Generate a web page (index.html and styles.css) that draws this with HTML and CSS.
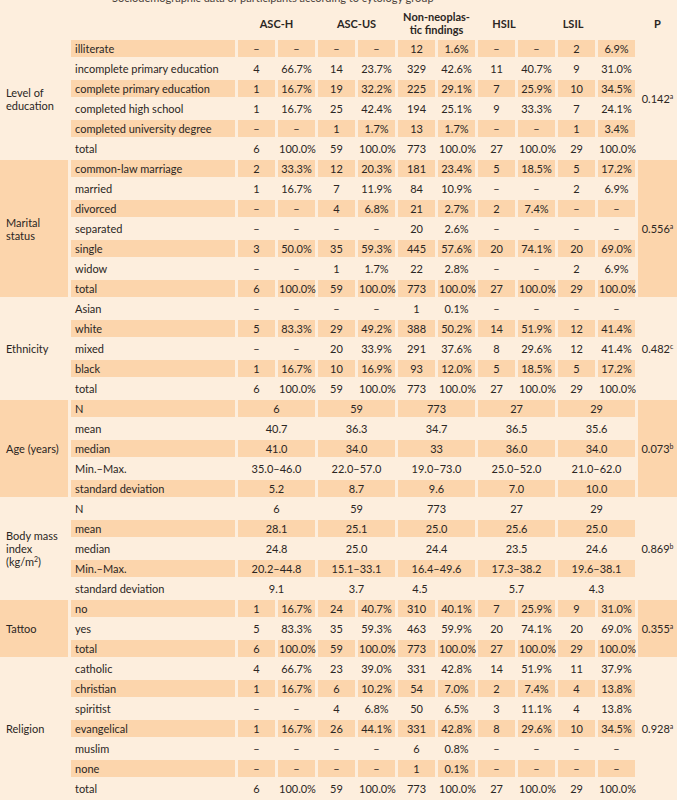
FILE: index.html
```html
<!DOCTYPE html>
<html lang="en">
<head>
    <meta charset="UTF-8">
    <meta name="viewport" content="width=device-width, initial-scale=1.0">
    <title>Sociodemographic data by cytology result</title>
    <link rel="stylesheet" href="styles.css">
</head>
<body>

<div class="caption"><span>Sociodemographic data of participants according to cytology group</span></div>

<table class="results">
    <colgroup>
        <col class="col-group">
        <col class="col-label">
        <col class="col-n"><col class="col-n">
        <col class="col-n"><col class="col-n">
        <col class="col-n"><col class="col-n">
        <col class="col-n"><col class="col-n">
        <col class="col-n"><col class="col-n">
        <col class="col-p">
    </colgroup>
    <thead>
        <tr class="head">
            <th colspan="2"></th>
            <th colspan="2">ASC-H</th>
            <th colspan="2">ASC-US</th>
            <th colspan="2">Non-neoplas-<br>tic findings</th>
            <th colspan="2" class="head-hsil">HSIL</th>
            <th colspan="2" class="head-lsil">LSIL</th>
            <th>P</th>
        </tr>
    </thead>
    <tbody>
        <!-- Level of education -->
        <tr class="band">
            <th class="grp" rowspan="6">Level of<br>education</th>
            <td class="label">illiterate</td>
            <td>–</td><td>–</td><td>–</td><td>–</td><td>12</td><td>1.6%</td><td>–</td><td>–</td><td>2</td><td>6.9%</td>
            <td class="p" rowspan="6">0.142<sup>a</sup></td>
        </tr>
        <tr>
            <td class="label">incomplete primary education</td>
            <td>4</td><td>66.7%</td><td>14</td><td>23.7%</td><td>329</td><td>42.6%</td><td>11</td><td>40.7%</td><td>9</td><td>31.0%</td>
        </tr>
        <tr class="band">
            <td class="label">complete primary education</td>
            <td>1</td><td>16.7%</td><td>19</td><td>32.2%</td><td>225</td><td>29.1%</td><td>7</td><td>25.9%</td><td>10</td><td>34.5%</td>
        </tr>
        <tr>
            <td class="label">completed high school</td>
            <td>1</td><td>16.7%</td><td>25</td><td>42.4%</td><td>194</td><td>25.1%</td><td>9</td><td>33.3%</td><td>7</td><td>24.1%</td>
        </tr>
        <tr class="band">
            <td class="label">completed university degree</td>
            <td>–</td><td>–</td><td>1</td><td>1.7%</td><td>13</td><td>1.7%</td><td>–</td><td>–</td><td>1</td><td>3.4%</td>
        </tr>
        <tr>
            <td class="label">total</td>
            <td>6</td><td>100.0%</td><td>59</td><td>100.0%</td><td>773</td><td>100.0%</td><td>27</td><td>100.0%</td><td>29</td><td>100.0%</td>
        </tr>

        <!-- Marital status -->
        <tr class="band">
            <th class="grp shade" rowspan="7">Marital<br>status</th>
            <td class="label">common-law marriage</td>
            <td>2</td><td>33.3%</td><td>12</td><td>20.3%</td><td>181</td><td>23.4%</td><td>5</td><td>18.5%</td><td>5</td><td>17.2%</td>
            <td class="p shade" rowspan="7">0.556<sup>a</sup></td>
        </tr>
        <tr>
            <td class="label">married</td>
            <td>1</td><td>16.7%</td><td>7</td><td>11.9%</td><td>84</td><td>10.9%</td><td>–</td><td>–</td><td>2</td><td>6.9%</td>
        </tr>
        <tr class="band">
            <td class="label">divorced</td>
            <td>–</td><td>–</td><td>4</td><td>6.8%</td><td>21</td><td>2.7%</td><td>2</td><td>7.4%</td><td>–</td><td>–</td>
        </tr>
        <tr>
            <td class="label">separated</td>
            <td>–</td><td>–</td><td>–</td><td>–</td><td>20</td><td>2.6%</td><td>–</td><td>–</td><td>–</td><td>–</td>
        </tr>
        <tr class="band">
            <td class="label">single</td>
            <td>3</td><td>50.0%</td><td>35</td><td>59.3%</td><td>445</td><td>57.6%</td><td>20</td><td>74.1%</td><td>20</td><td>69.0%</td>
        </tr>
        <tr>
            <td class="label">widow</td>
            <td>–</td><td>–</td><td>1</td><td>1.7%</td><td>22</td><td>2.8%</td><td>–</td><td>–</td><td>2</td><td>6.9%</td>
        </tr>
        <tr class="band">
            <td class="label">total</td>
            <td>6</td><td>100.0%</td><td>59</td><td>100.0%</td><td>773</td><td>100.0%</td><td>27</td><td>100.0%</td><td>29</td><td>100.0%</td>
        </tr>

        <!-- Ethnicity -->
        <tr>
            <th class="grp" rowspan="5">Ethnicity</th>
            <td class="label">Asian</td>
            <td>–</td><td>–</td><td>–</td><td>–</td><td>1</td><td>0.1%</td><td>–</td><td>–</td><td>–</td><td>–</td>
            <td class="p" rowspan="5">0.482<sup>c</sup></td>
        </tr>
        <tr class="band">
            <td class="label">white</td>
            <td>5</td><td>83.3%</td><td>29</td><td>49.2%</td><td>388</td><td>50.2%</td><td>14</td><td>51.9%</td><td>12</td><td>41.4%</td>
        </tr>
        <tr>
            <td class="label">mixed</td>
            <td>–</td><td>–</td><td>20</td><td>33.9%</td><td>291</td><td>37.6%</td><td>8</td><td>29.6%</td><td>12</td><td>41.4%</td>
        </tr>
        <tr class="band">
            <td class="label">black</td>
            <td>1</td><td>16.7%</td><td>10</td><td>16.9%</td><td>93</td><td>12.0%</td><td>5</td><td>18.5%</td><td>5</td><td>17.2%</td>
        </tr>
        <tr>
            <td class="label">total</td>
            <td>6</td><td>100.0%</td><td>59</td><td>100.0%</td><td>773</td><td>100.0%</td><td>27</td><td>100.0%</td><td>29</td><td>100.0%</td>
        </tr>

        <!-- Age -->
        <tr class="band">
            <th class="grp shade" rowspan="5">Age (years)</th>
            <td class="label">N</td>
            <td colspan="2">6</td><td colspan="2">59</td><td colspan="2">773</td><td colspan="2">27</td><td colspan="2">29</td>
            <td class="p shade" rowspan="5">0.073<sup>b</sup></td>
        </tr>
        <tr>
            <td class="label">mean</td>
            <td colspan="2">40.7</td><td colspan="2">36.3</td><td colspan="2">34.7</td><td colspan="2">36.5</td><td colspan="2">35.6</td>
        </tr>
        <tr class="band">
            <td class="label">median</td>
            <td colspan="2">41.0</td><td colspan="2">34.0</td><td colspan="2">33</td><td colspan="2">36.0</td><td colspan="2">34.0</td>
        </tr>
        <tr>
            <td class="label">Min.–Max.</td>
            <td colspan="2">35.0–46.0</td><td colspan="2">22.0–57.0</td><td colspan="2">19.0–73.0</td><td colspan="2">25.0–52.0</td><td colspan="2">21.0–62.0</td>
        </tr>
        <tr class="band">
            <td class="label">standard deviation</td>
            <td colspan="2">5.2</td><td colspan="2">8.7</td><td colspan="2">9.6</td><td colspan="2">7.0</td><td colspan="2">10.0</td>
        </tr>

        <!-- Body mass index -->
        <tr>
            <th class="grp" rowspan="5">Body mass<br>index<br>(kg/m<sup>2</sup>)</th>
            <td class="label">N</td>
            <td colspan="2">6</td><td colspan="2">59</td><td colspan="2">773</td><td colspan="2">27</td><td colspan="2">29</td>
            <td class="p" rowspan="5">0.869<sup>b</sup></td>
        </tr>
        <tr class="band">
            <td class="label">mean</td>
            <td colspan="2">28.1</td><td colspan="2">25.1</td><td colspan="2">25.0</td><td colspan="2">25.6</td><td colspan="2">25.0</td>
        </tr>
        <tr>
            <td class="label">median</td>
            <td colspan="2">24.8</td><td colspan="2">25.0</td><td colspan="2">24.4</td><td colspan="2">23.5</td><td colspan="2">24.6</td>
        </tr>
        <tr class="band">
            <td class="label">Min.–Max.</td>
            <td colspan="2">20.2–44.8</td><td colspan="2">15.1–33.1</td><td colspan="2">16.4–49.6</td><td colspan="2">17.3–38.2</td><td colspan="2">19.6–38.1</td>
        </tr>
        <tr>
            <td class="label">standard deviation</td>
            <td colspan="2">9.1</td><td colspan="2">3.7</td><td colspan="2" class="shift-left">4.5</td><td colspan="2">5.7</td><td colspan="2">4.3</td>
        </tr>

        <!-- Tattoo -->
        <tr class="band">
            <th class="grp shade" rowspan="3">Tattoo</th>
            <td class="label">no</td>
            <td>1</td><td>16.7%</td><td>24</td><td>40.7%</td><td>310</td><td>40.1%</td><td>7</td><td>25.9%</td><td>9</td><td>31.0%</td>
            <td class="p shade" rowspan="3">0.355<sup>a</sup></td>
        </tr>
        <tr>
            <td class="label">yes</td>
            <td>5</td><td>83.3%</td><td>35</td><td>59.3%</td><td>463</td><td>59.9%</td><td>20</td><td>74.1%</td><td>20</td><td>69.0%</td>
        </tr>
        <tr class="band">
            <td class="label">total</td>
            <td>6</td><td>100.0%</td><td>59</td><td>100.0%</td><td>773</td><td>100.0%</td><td>27</td><td>100.0%</td><td>29</td><td>100.0%</td>
        </tr>

        <!-- Religion -->
        <tr>
            <th class="grp" rowspan="7">Religion</th>
            <td class="label">catholic</td>
            <td>4</td><td>66.7%</td><td>23</td><td>39.0%</td><td>331</td><td>42.8%</td><td>14</td><td>51.9%</td><td>11</td><td>37.9%</td>
            <td class="p" rowspan="7">0.928<sup>a</sup></td>
        </tr>
        <tr class="band">
            <td class="label">christian</td>
            <td>1</td><td>16.7%</td><td>6</td><td>10.2%</td><td>54</td><td>7.0%</td><td>2</td><td>7.4%</td><td>4</td><td>13.8%</td>
        </tr>
        <tr>
            <td class="label">spiritist</td>
            <td>–</td><td>–</td><td>4</td><td>6.8%</td><td>50</td><td>6.5%</td><td>3</td><td>11.1%</td><td>4</td><td>13.8%</td>
        </tr>
        <tr class="band">
            <td class="label">evangelical</td>
            <td>1</td><td>16.7%</td><td>26</td><td>44.1%</td><td>331</td><td>42.8%</td><td>8</td><td>29.6%</td><td>10</td><td>34.5%</td>
        </tr>
        <tr>
            <td class="label">muslim</td>
            <td>–</td><td>–</td><td>–</td><td>–</td><td>6</td><td>0.8%</td><td>–</td><td>–</td><td>–</td><td>–</td>
        </tr>
        <tr class="band">
            <td class="label">none</td>
            <td>–</td><td>–</td><td>–</td><td>–</td><td>1</td><td>0.1%</td><td>–</td><td>–</td><td>–</td><td>–</td>
        </tr>
        <tr>
            <td class="label">total</td>
            <td>6</td><td>100.0%</td><td>59</td><td>100.0%</td><td>773</td><td>100.0%</td><td>27</td><td>100.0%</td><td>29</td><td>100.0%</td>
        </tr>
    </tbody>
</table>

</body>
</html>
```

FILE: styles.css
```css
body {
    font-family: Lato, "Liberation Sans", sans-serif;
    font-size: 11px;
    margin: 0;
    background-color: #fdeedd;
    color: #2b2623;
    overflow: hidden;
}

/* only the bottom of the caption line shows above the table */
.caption {
    height: 5px;
    overflow: hidden;
    color: #4a423c;
}
.caption span {
    display: block;
    padding-left: 112px;
    line-height: 12px;
    margin-top: -8px;
    white-space: nowrap;
}

.results {
    border-collapse: separate;
    border-spacing: 3px;
    table-layout: fixed;
    width: calc(100% + 6px);
    margin: -2px -3px 0;
}
.col-group { width: 68px; }
.col-label { width: 164px; }
.col-n { width: 37px; }

th, td {
    height: 17px;
    padding: 0 1px;
    line-height: 17px;
    text-align: center;
    vertical-align: middle;
    font-weight: normal;
    white-space: nowrap;
}

.head th {
    height: 28px;
    padding-top: 3px;
    line-height: 13px;
    font-weight: bold;
}
.head .head-hsil { padding-right: 26px; }
.head .head-lsil { padding-right: 48px; }

.band td {
    background-color: #fcd5ac;
}
td.label {
    text-align: left;
    padding-left: 4px;
}
.shift-left { padding-right: 34px; }

.results .grp,
.results .p {
    background-color: transparent;
}
.results .grp {
    text-align: left;
    padding-left: 6px;
    line-height: 13px;
    white-space: normal;
}
.results .shade {
    background-color: #fcd5ac;
}

sup {
    font-size: 7px;
    line-height: 0;
    vertical-align: 4px;
}
```
